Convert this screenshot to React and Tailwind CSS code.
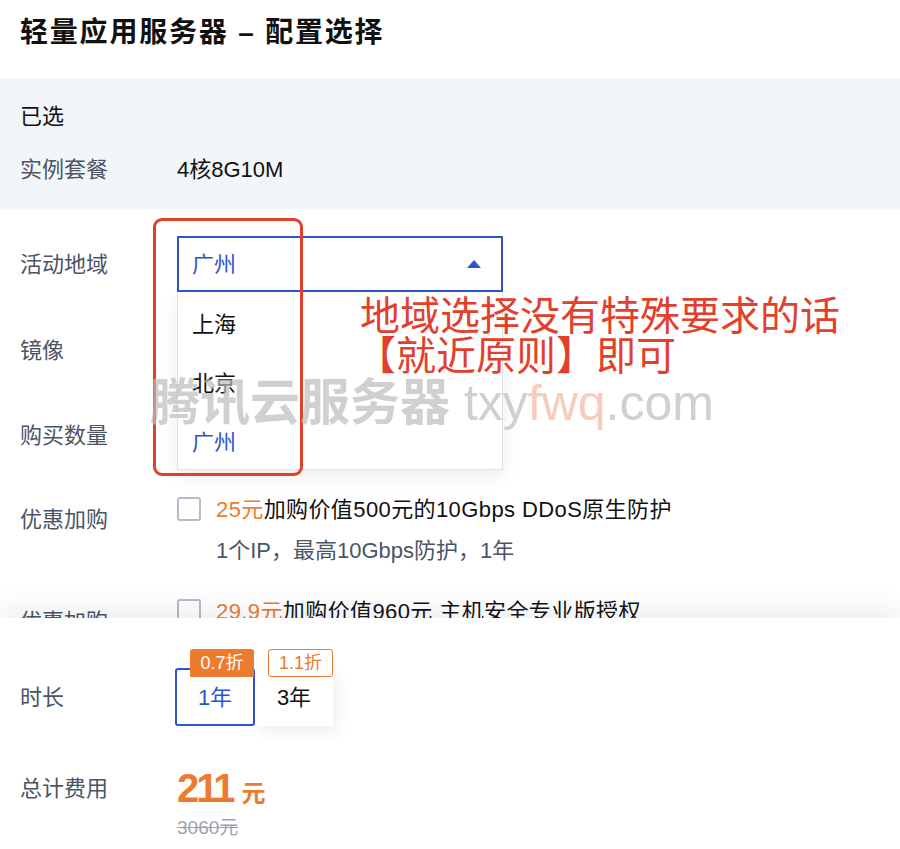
const font = { fontFamily: '"Liberation Sans", "Noto Sans CJK SC", sans-serif' };

function Label({ children, className = "" }) {
  return (
    <div className={`w-[157px] shrink-0 text-[22px] text-[#4b5565] ${className}`}>{children}</div>
  );
}

function Checkbox() {
  return <div className="w-[24px] h-[24px] shrink-0 rounded-[3px] border-2 border-[#b4bcc8] bg-white" />;
}

export default function App() {
  return (
    <div className="w-[900px] h-[849px] overflow-hidden bg-white relative" style={font}>
      {/* scrolling config area */}
      <div className="h-[618px] overflow-hidden relative">
        <div className="h-[78px] flex items-center px-5 pb-[12px]">
          <h1 className="text-[28px] font-bold text-[#111] tracking-[1.8px]">轻量应用服务器 – 配置选择</h1>
        </div>

        <div className="h-[131px] bg-[#f3f6f9] px-5 pt-[24px]">
          <div className="h-[28px] flex items-center text-[22px] text-[#111]">已选</div>
          <div className="mt-[25px] h-[28px] flex items-center">
            <Label>实例套餐</Label>
            <div className="text-[22px] text-[#111]">4核8G10M</div>
          </div>
        </div>

        <div className="px-5 pt-[27px]">
          <div className="h-[56px] flex items-center">
            <Label>活动地域</Label>
            <div className="relative w-[326px] h-[56px] border-2 border-[#2d55c8] flex items-center justify-between pl-[13px] pr-[20px]">
              <span className="text-[22px] text-[#2d55c8]">广州</span>
              <svg width="14" height="8" viewBox="0 0 14 8"><path d="M7 0 L14 8 L0 8 Z" fill="#2d55c8" /></svg>
            </div>
          </div>

          <div className="mt-[44px] h-[28px] flex items-center">
            <Label>镜像</Label>
          </div>

          <div className="mt-[57px] h-[28px] flex items-center">
            <Label>购买数量</Label>
          </div>

          <div className="mt-[46px] flex">
            <Label className="pt-[11px] leading-[28px]">优惠加购</Label>
            <div>
              <div className="flex items-center h-[28px] gap-[15px]">
                <Checkbox />
                <div className="text-[22px] text-[#111] whitespace-nowrap tracking-[0.4px]">
                  <span className="text-[#ed7b2f]">25元</span>加购价值500元的10Gbps DDoS原生防护
                </div>
              </div>
              <div className="mt-[14px] ml-[39px] h-[28px] leading-[28px] text-[22px] text-[#4b5565]">
                1个IP，最高10Gbps防护，1年
              </div>
            </div>
          </div>

          <div className="mt-[32px] flex">
            <Label className="pt-[11px] leading-[28px]">优惠加购</Label>
            <div className="flex items-center h-[28px] gap-[15px]">
              <Checkbox />
              <div className="text-[22px] text-[#111] whitespace-nowrap tracking-[0.4px]">
                <span className="text-[#ed7b2f]">29.9元</span>加购价值960元 主机安全专业版授权
              </div>
            </div>
          </div>
        </div>

        {/* dropdown menu */}
        <div className="absolute left-[177px] top-[292px] w-[326px] h-[178px] bg-white border border-[#dde3ea] border-t-0 shadow-[0_6px_16px_rgba(0,0,0,0.08)] pt-[3px] z-10">
          <div className="h-[59px] flex items-center pl-[14px] text-[22px] text-[#111]">上海</div>
          <div className="h-[59px] flex items-center pl-[14px] text-[22px] text-[#111]">北京</div>
          <div className="h-[59px] flex items-center pl-[14px] text-[22px] text-[#2d55c8]">广州</div>
        </div>

        {/* annotation */}
        <div className="absolute left-[153px] top-[218px] w-[150px] h-[258px] border-[3px] border-[#e2402c] rounded-[9px] z-20" />
        <div className="absolute left-[360px] top-[293px] text-[40px] leading-[40px] text-[#e2402c] z-20 whitespace-nowrap" style={{ fontFamily: '"Noto Sans CJK SC", sans-serif' }}>
          <div>地域选择没有特殊要求的话</div>
          <div className="-ml-[4px]">【就近原则】即可</div>
        </div>

        {/* watermark */}
        <div className="absolute left-[150px] top-[366px] text-[50px] leading-[64px] whitespace-nowrap z-30 opacity-70 pointer-events-none">
          <span className="font-bold text-[#bdbdbd]" style={{ fontFamily: '"Noto Sans CJK SC", sans-serif' }}>腾讯云服务器</span>
          <span className="text-[#bdbdbd]"> txy</span>
          <span className="text-[#f2b8a0]">fwq</span>
          <span className="text-[#bdbdbd]">.com</span>
        </div>
      </div>

      {/* bottom panel */}
      <div className="relative z-40 h-[231px] bg-white shadow-[0_-10px_24px_rgba(30,50,90,0.08)] px-5">
        <div className="flex items-end h-[108px]">
          <Label className="h-[58px] flex items-center">时长</Label>
          <div className="flex -ml-[2px]">
            <div className="relative">
              <div className="absolute -top-[19px] left-[15px] w-[64px] h-[28px] bg-[#ed7b2f] rounded-t-[3px] flex items-center justify-center text-[18px] text-white">0.7折</div>
              <div className="w-[80px] h-[58px] border-2 border-[#2d55c8] rounded-[3px] flex items-center justify-center text-[22px] text-[#2d55c8]">1年</div>
            </div>
            <div className="relative">
              <div className="absolute -top-[19px] left-[13px] w-[65px] h-[28px] bg-white border border-[#ed7b2f] rounded-[3px] flex items-center justify-center text-[18px] text-[#ed7b2f]">1.1折</div>
              <div className="w-[78px] h-[58px] bg-white shadow-[4px_6px_14px_rgba(30,50,90,0.08)] flex items-center justify-center text-[22px] text-[#111]">3年</div>
            </div>
          </div>
        </div>

        <div className="flex mt-[42px]">
          <Label className="h-[40px] flex items-center">总计费用</Label>
          <div>
            <div className="flex items-baseline h-[40px] text-[#ed7b2f] font-bold">
              <span className="text-[40px] leading-[40px] tracking-[-3px]">211</span>
              <span className="text-[24px] ml-[9px]">元</span>
            </div>
            <div className="mt-[6px] text-[19px] text-[#9aa3b2] line-through">3060元</div>
          </div>
        </div>
      </div>
    </div>
  );
}
